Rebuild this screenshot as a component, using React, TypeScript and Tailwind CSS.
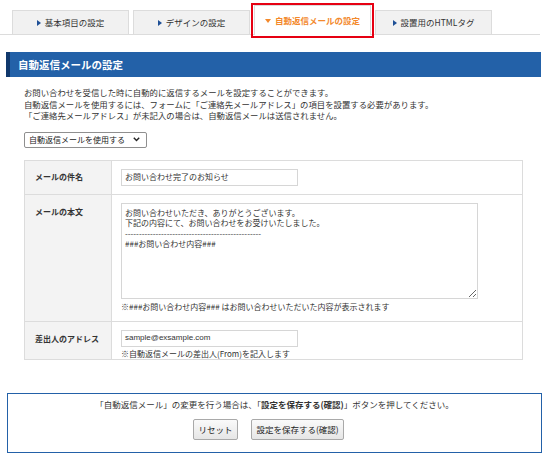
import React from "react";

const font = { fontFamily: "'Noto Sans CJK JP', 'Noto Sans', sans-serif" };

function RightTri() {
  return (
    <svg width="4" height="6" viewBox="0 0 4 6" className="mr-[4px] shrink-0">
      <path d="M0 0 L4 3 L0 6 Z" fill="#1e4f96" />
    </svg>
  );
}
function DownTri() {
  return (
    <svg width="6" height="4" viewBox="0 0 6 4" className="mr-[4px] shrink-0">
      <path d="M0 0 L6 0 L3 4 Z" fill="#f3892c" />
    </svg>
  );
}

function Tab({ label, active }: { label: string; active?: boolean }) {
  if (active) {
    return (
      <div className="relative w-[117px] h-[30px] mb-[-1px] bg-white border border-[#dcdcdc] border-b-0 flex items-center justify-center text-[8.5px] text-[#f3892c] font-bold">
        <DownTri />
        {label}
        <div className="absolute left-[-4px] top-[-3px] w-[123px] h-[35px] border-2 border-[#e60012] pointer-events-none" />
      </div>
    );
  }
  return (
    <div className="w-[117px] h-[24px] bg-[#f1f1f1] border border-[#dcdcdc] border-b-0 flex items-center justify-center text-[8.5px] text-[#333]">
      <RightTri />
      {label}
    </div>
  );
}

export default function App() {
  return (
    <div className="w-[550px] h-[458px] bg-white text-[#333] overflow-hidden" style={font}>
      <div className="w-[540px] h-[35px] flex items-end gap-[4px] pl-[12px] border-b border-[#dcdcdc]">
        <Tab label="基本項目の設定" />
        <Tab label="デザインの設定" />
        <Tab label="自動返信メールの設定" active />
        <Tab label="設置用のHTMLタグ" />
      </div>

      <div className="ml-[6px] mt-[17px] w-[535px] h-[25px] bg-[#2361a8] border-l-[4px] border-[#10386c] flex items-center pl-[8px] text-white font-bold text-[10.5px]">
        自動返信メールの設定
      </div>

      <div className="ml-[24px] mt-[10px] text-[8.4px] leading-[11.5px] text-[#333]">
        <p>お問い合わせを受信した時に自動的に返信するメールを設定することができます。</p>
        <p>自動返信メールを使用するには、フォームに「ご連絡先メールアドレス」の項目を設置する必要があります。</p>
        <p>「ご連絡先メールアドレス」が未記入の場合は、自動返信メールは送信されません。</p>
      </div>

      <div className="ml-[24px] mt-[10px] w-[123px] h-[16px] border border-[#8f8f8f] rounded-[2px] flex items-center justify-between pl-[4px] pr-[6px] text-[8px] text-[#222]">
        <span>自動返信メールを使用する</span>
        <svg width="7" height="5" viewBox="0 0 7 5">
          <path d="M0.8 0.8 L3.5 3.6 L6.2 0.8" stroke="#222" strokeWidth="1.4" fill="none" />
        </svg>
      </div>

      <div className="ml-[24px] mt-[12px] w-[499px] border border-[#dcdcdc] text-[8px]">
        <div className="flex h-[34px] border-b border-[#dcdcdc]">
          <div className="w-[87px] shrink-0 bg-[#f3f3f3] border-r border-[#dcdcdc] font-bold pl-[10px] pt-[10px]">メールの件名</div>
          <div className="pl-[9px] pt-[8px]">
            <div className="w-[177px] h-[17px] border border-[#d6d6d6] flex items-center px-[3px]">お問い合わせ完了のお知らせ</div>
          </div>
        </div>
        <div className="flex h-[127px] border-b border-[#dcdcdc]">
          <div className="w-[87px] shrink-0 bg-[#f3f3f3] border-r border-[#dcdcdc] font-bold pl-[10px] pt-[11px]">メールの本文</div>
          <div className="pl-[9px] pt-[8px] flex flex-col">
            <textarea
              readOnly
              className="w-[357px] h-[96px] border border-[#d6d6d6] px-[3px] pt-[4px] text-[8px] leading-[10.5px] text-[#333] outline-none"
              style={font}
              defaultValue={"お問い合わせいただき、ありがとうございます。\n下記の内容にて、お問い合わせをお受けいたしました。\n-------------------------------------------------\n###お問い合わせ内容###"}
            />
            <p className="mt-[3px] leading-[10px]">※###お問い合わせ内容### はお問い合わせいただいた内容が表示されます</p>
          </div>
        </div>
        <div className="flex h-[37px]">
          <div className="w-[87px] shrink-0 bg-[#f3f3f3] border-r border-[#dcdcdc] font-bold pl-[10px] pt-[11px]">差出人のアドレス</div>
          <div className="pl-[9px] pt-[8px] flex flex-col">
            <div className="w-[177px] h-[17px] border border-[#d6d6d6] flex items-center px-[3px]" style={{ fontFamily: "'Liberation Sans', 'Noto Sans CJK JP', sans-serif" }}>sample@exsample.com</div>
            <p className="mt-[2px] leading-[10px]">※自動返信メールの差出人(From)を記入します</p>
          </div>
        </div>
      </div>

      <div className="ml-[7px] mt-[33px] w-[535px] h-[60px] border-[1.5px] border-[#2361a8] flex flex-col items-center pt-[4px] text-[8.5px]">
        <p className="leading-[12px]">
          「自動返信メール」の変更を行う場合は、「<span className="font-bold">設定を保存する(確認)</span>」ボタンを押してください。
        </p>
        <div className="flex gap-[13px] mt-[9px] mr-[12px]">
          <button className="w-[45px] h-[21px] border border-[#a9a9a9] rounded-[2px] bg-gradient-to-b from-[#fafafa] to-[#e6e6e6] text-[8.5px] text-[#222]" style={font}>リセット</button>
          <button className="w-[93px] h-[21px] border border-[#a9a9a9] rounded-[2px] bg-gradient-to-b from-[#fafafa] to-[#e6e6e6] text-[8.5px] text-[#222]" style={font}>設定を保存する(確認)</button>
        </div>
      </div>
    </div>
  );
}
